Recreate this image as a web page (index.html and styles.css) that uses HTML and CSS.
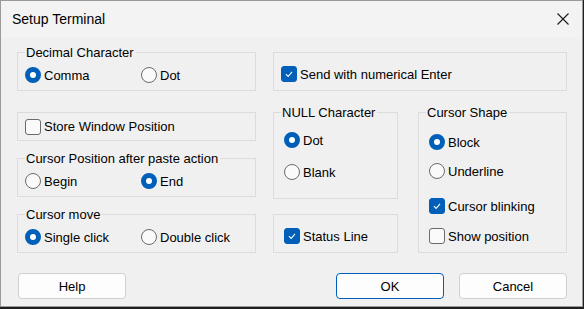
FILE: index.html
```html
<!DOCTYPE html>
<html>

<head>
    <title>Setup Terminal</title>
    <link rel="stylesheet" href="styles.css">
</head>

<body>
    <div class="window">
        <div class="titlebar">
            <span class="title">Setup Terminal</span>
            <svg class="close" width="12" height="12" viewBox="0 0 12 12">
                <path d="M0.5 0.5L11.5 11.5M11.5 0.5L0.5 11.5" stroke="#1a1a1a" stroke-width="1.1" fill="none"/>
            </svg>
        </div>

        <div class="content">
            <fieldset class="group decimal">
                <legend>Decimal Character</legend>
                <div class="pair">
                    <label class="opt"><span class="radio on"></span>Comma</label>
                    <label class="opt"><span class="radio"></span>Dot</label>
                </div>
            </fieldset>

            <div class="box send">
                <label class="opt"><span class="check on"><svg viewBox="0 0 16 16"><path d="M4.5 8.2L7 10.7L11.5 5.6"/></svg></span>Send with numerical Enter</label>
            </div>

            <div class="col col-left">
                <div class="box store">
                    <label class="opt"><span class="check"></span>Store Window Position</label>
                </div>
                <fieldset class="group">
                    <legend>Cursor Position after paste action</legend>
                    <div class="pair">
                        <label class="opt"><span class="radio"></span>Begin</label>
                        <label class="opt"><span class="radio on"></span>End</label>
                    </div>
                </fieldset>
                <fieldset class="group">
                    <legend>Cursor move</legend>
                    <div class="pair">
                        <label class="opt"><span class="radio on"></span>Single click</label>
                        <label class="opt"><span class="radio"></span>Double click</label>
                    </div>
                </fieldset>
            </div>

            <div class="col col-mid">
                <fieldset class="group wide-pad null">
                    <legend>NULL Character</legend>
                    <label class="opt"><span class="radio on"></span>Dot</label>
                    <label class="opt"><span class="radio"></span>Blank</label>
                </fieldset>
                <div class="box status">
                    <label class="opt"><span class="check on"><svg viewBox="0 0 16 16"><path d="M4.5 8.2L7 10.7L11.5 5.6"/></svg></span>Status Line</label>
                </div>
            </div>

            <fieldset class="group wide-pad shape">
                <legend>Cursor Shape</legend>
                <label class="opt"><span class="radio on"></span>Block</label>
                <label class="opt underline"><span class="radio"></span>Underline</label>
                <label class="opt blink"><span class="check on"><svg viewBox="0 0 16 16"><path d="M4.5 8.2L7 10.7L11.5 5.6"/></svg></span>Cursor blinking</label>
                <label class="opt showpos"><span class="check"></span>Show position</label>
            </fieldset>
        </div>

        <div class="footer">
            <button type="button" class="btn">Help</button>
            <div class="spacer"></div>
            <button type="button" class="btn default">OK</button>
            <button type="button" class="btn">Cancel</button>
        </div>
    </div>
</body>

</html>
```

FILE: styles.css
```css
body {
    margin: 0;
    padding: 0;
    background-color: #1f1f1f;
    font-family: "Liberation Sans", Arial, sans-serif;
    font-size: 13px;
    color: #000;
}

.window {
    box-sizing: border-box;
    width: 583px;
    height: 307px;
    border: 1px solid #9a9a9a;
    background-color: #f0f0f0;
    display: flex;
    flex-direction: column;
}

.titlebar {
    height: 36px;
    display: flex;
    align-items: center;
    justify-content: space-between;
    padding: 0 13px 0 11px;
    background-color: #f3f3f3;
}

.title {
    font-size: 14px;
}

.content {
    display: grid;
    grid-template-columns: 256px 145px 149px;
    row-gap: 13px;
    padding: 7px 0 0 16px;
    align-items: start;
}

/* group boxes */
.group {
    box-sizing: border-box;
    margin: 0;
    width: 239px;
    height: 47px;
    padding: 6px 7px 0;
    border: 1px solid #dcdcdc;
    min-width: 0;
}

.group legend {
    padding: 0 2px 0 1px;
    line-height: 17px;
}

.wide-pad {
    padding-left: 10px;
    padding-right: 10px;
}

.wide-pad legend {
    margin-left: -3px;
}

.box {
    box-sizing: border-box;
    border: 1px solid #dcdcdc;
    display: flex;
    align-items: center;
    padding-left: 7px;
}

.send {
    grid-column: 2 / span 2;
    width: 294px;
    height: 39px;
    margin-top: 8px;
    align-items: flex-start;
    padding-top: 13px;
}

.col {
    display: flex;
    flex-direction: column;
}

.col-left {
    gap: 9px;
}

.store {
    width: 239px;
    height: 29px;
    margin-top: 8px;
}

.col-mid .group {
    width: 125px;
}

.null {
    height: 95px;
    padding-top: 11px;
    display: flex;
    flex-direction: column;
    gap: 16px;
}

.status {
    width: 125px;
    height: 39px;
    margin-top: 15px;
    padding-left: 10px;
    align-items: flex-start;
    padding-top: 13px;
}

.shape {
    width: 149px;
    height: 149px;
    padding-top: 13px;
    display: flex;
    flex-direction: column;
}

.shape .underline {
    margin-top: 13px;
}

.shape .blink {
    margin-top: 19px;
}

.shape .showpos {
    margin-top: 14px;
}

/* options */
.pair {
    display: grid;
    grid-template-columns: 116px auto;
}

.opt {
    display: flex;
    align-items: center;
    height: 16px;
    white-space: nowrap;
}

.radio,
.check {
    box-sizing: border-box;
    flex: none;
    width: 16px;
    height: 16px;
    margin-right: 3px;
    border: 1px solid #6b6b6b;
    background-color: #fafafa;
}

.radio {
    border-radius: 50%;
}

.radio.on {
    border: 5px solid #005fb8;
    background-color: #fff;
}

.check {
    border-radius: 3px;
}

.check.on {
    border-color: #005fb8;
    background-color: #005fb8;
}

.check svg {
    display: block;
    width: 14px;
    height: 14px;
}

.check path {
    fill: none;
    stroke: #fff;
    stroke-width: 1.2;
}

/* buttons */
.footer {
    display: flex;
    gap: 15px;
    padding: 20px 15px 0 17px;
}

.spacer {
    flex: 1;
}

.btn {
    box-sizing: border-box;
    width: 108px;
    height: 26px;
    border: 1px solid #d0d0d0;
    border-radius: 4px;
    background-color: #fdfdfd;
    font-family: "Liberation Sans", Arial, sans-serif;
    font-size: 13px;
    color: #000;
    padding: 0;
}

.btn.default {
    border-color: #005fb8;
}
```
